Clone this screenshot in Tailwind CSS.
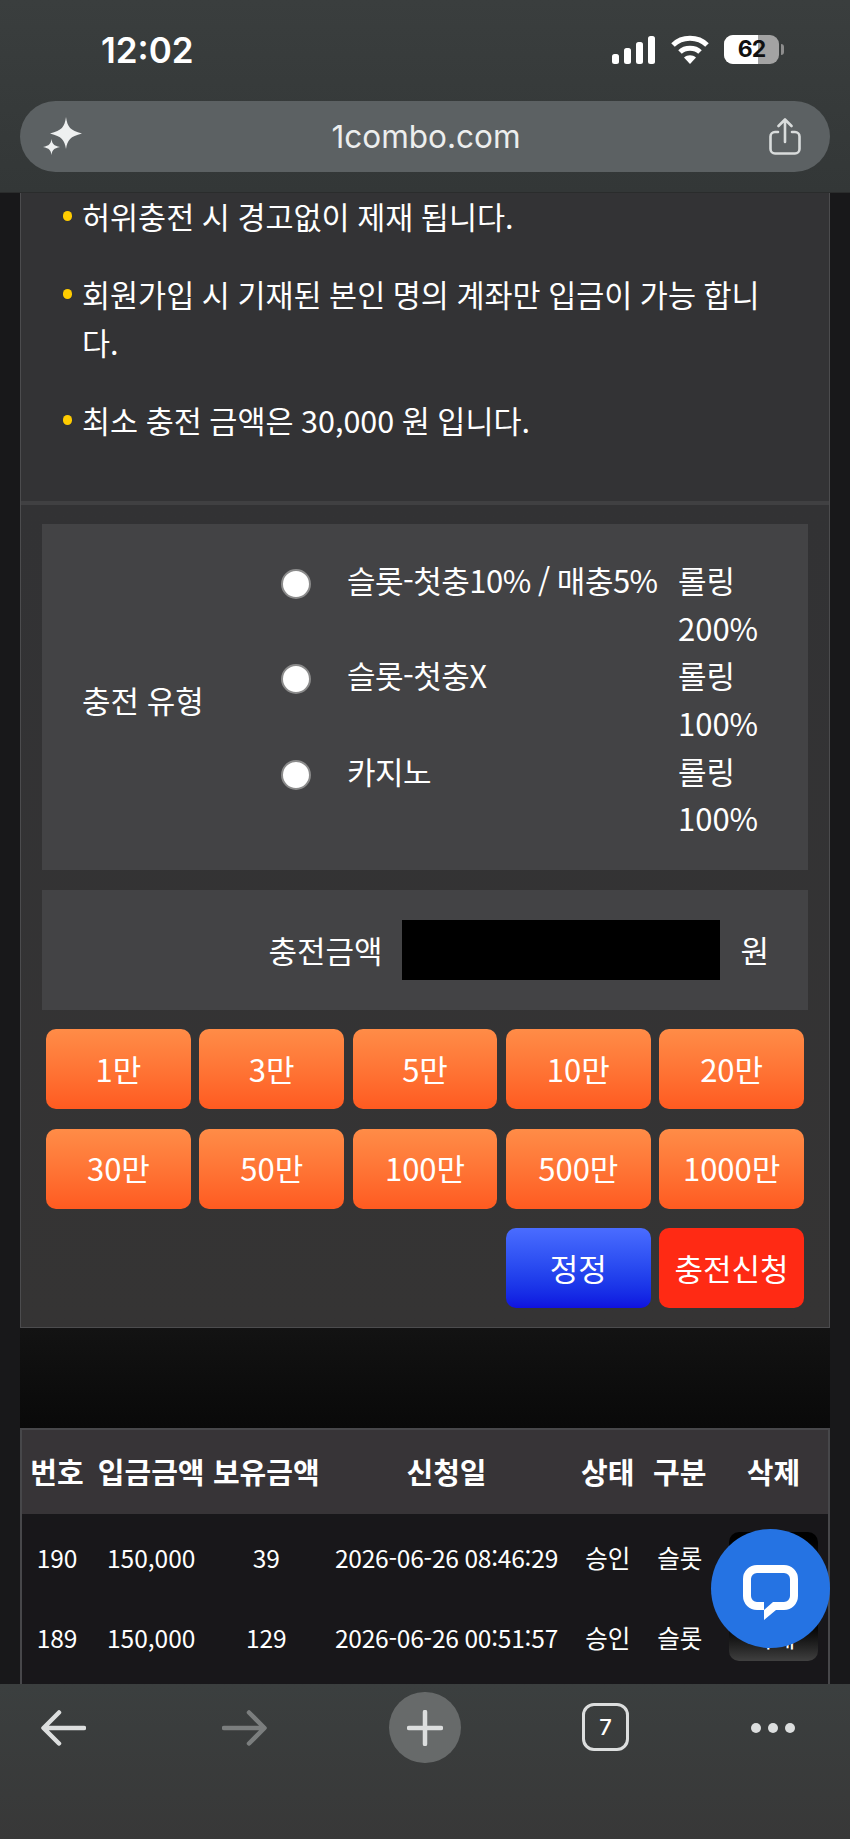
<!DOCTYPE html>
<html lang="ko">
<head>
    <meta charset="UTF-8">
    <meta name="viewport" content="width=device-width, initial-scale=1.0">
    <title>1combo.com</title>
    <script src="https://cdn.jsdelivr.net/npm/@tailwindcss/browser@4"></script>
</head>
<body class="bg-[#18181a] text-white font-['Noto_Sans_CJK_KR','Noto_Sans',sans-serif]">
    <div class="relative flex flex-col w-[850px] h-[1839px] overflow-hidden">

        <!-- Browser top bar -->
        <header class="h-[193px] shrink-0 bg-gradient-to-b from-[#3a3e3e] to-[#333737] border-b border-[#2a2c2c] px-[20px]">
            <div class="relative h-[101px] font-['Inter',sans-serif]">
                <span class="absolute left-[81px] top-[27px] text-[35px] leading-[46px] font-semibold">12:02</span>
                <!-- signal -->
                <svg class="absolute left-[592px] top-[36px]" width="44" height="28" viewBox="0 0 44 28" fill="#fff">
                    <rect x="0" y="18" width="7" height="10" rx="2.5"/>
                    <rect x="12" y="12" width="7" height="16" rx="2.5"/>
                    <rect x="24" y="6" width="7" height="22" rx="2.5"/>
                    <rect x="36" y="0" width="7" height="28" rx="2.5"/>
                </svg>
                <!-- wifi -->
                <svg class="absolute left-[651px] top-[35px]" width="38" height="29" viewBox="0 0 38 29" fill="none" stroke="#fff" stroke-width="5">
                    <path d="M2 10 C11 1 27 1 36 10"/>
                    <path d="M9 17 C14 12 24 12 29 17"/>
                    <path d="M19 29 L13 22.5 C16.5 19.5 21.5 19.5 25 22.5 Z" fill="#fff" stroke="none"/>
                </svg>
                <!-- battery -->
                <div class="absolute left-[704px] top-[35px] w-[55px] h-[29px] rounded-[9px] overflow-hidden bg-[#a3a3a3]">
                    <div class="w-[34px] h-full bg-white"></div>
                    <span class="absolute inset-0 flex items-center justify-center text-[#111] text-[23px] font-bold tracking-[-1px]">62</span>
                </div>
                <div class="absolute left-[761px] top-[44px] w-[3px] h-[11px] rounded-r-full bg-[#8d8d8d]"></div>
            </div>
            <div class="flex items-center justify-between h-[71px] rounded-[36px] bg-[#5c6163] pl-[23px] pr-[29px]">
                <svg width="40" height="40" viewBox="0 0 40 40" fill="#eef0f0">
                    <path d="M23 0 C24.5 10 27 13.5 39 16.5 C27 19.5 24.5 23 23 32 C21.5 23 19 19.5 7 16.5 C19 13.5 21.5 10 23 0 Z"/>
                    <path d="M8.500 22 C9.300 27 10.500 28.500 17 30 C10.500 31.500 9.300 33 8.500 38 C7.700 33 6.500 31.500 0 30 C6.500 28.500 7.700 27 8.500 22 Z"/>
                </svg>
                <span class="font-['Inter',sans-serif] text-[31.500px] text-[#eceeee]">1combo.com</span>
                <svg width="32" height="37" viewBox="0 0 32 37" fill="none" stroke="#d9dcdc" stroke-width="2.600" stroke-linecap="round" stroke-linejoin="round">
                    <path d="M9 14 H6 A4.500 4.500 0 0 0 1.500 18.500 V31 A4.500 4.500 0 0 0 6 35.500 H26 A4.500 4.500 0 0 0 30.500 31 V18.500 A4.500 4.500 0 0 0 26 14 H23"/>
                    <path d="M16 24 V2 M9.500 8 L16 1.500 L22.500 8"/>
                </svg>
            </div>
        </header>

        <!-- Page content -->
        <main class="flex-1 mx-[20px] overflow-hidden [word-spacing:-1px]">
            <section class="-mt-[1px] bg-[#333335] border-x border-b border-[#4c4c4e]">
                <ul class="pl-[42px] pr-[50px] pb-[57px] text-[30.500px] leading-[48px] space-y-[30px]">
                    <li class="relative pl-[19px]"><span class="absolute left-0 top-[19px] w-[9px] h-[10px] rounded-full bg-[#ffcc00]"></span>허위충전 시 경고없이 제재 됩니다.</li>
                    <li class="relative pl-[19px]"><span class="absolute left-0 top-[19px] w-[9px] h-[10px] rounded-full bg-[#ffcc00]"></span>회원가입 시 기재된 본인 명의 계좌만 입금이 가능 합니<br>다.</li>
                    <li class="relative pl-[19px]"><span class="absolute left-0 top-[19px] w-[9px] h-[10px] rounded-full bg-[#ffcc00]"></span>최소 충전 금액은 30,000 원 입니다.</li>
                </ul>
                <div class="h-[4px] bg-[#404042]"></div>

                <div class="pt-[19px] pb-[19px] px-[21px] bg-gradient-to-b from-[#323234] to-[#353434]">
                    <!-- charge type -->
                    <div class="flex items-center h-[346px] bg-[#434345] pl-[40px] pt-[6px] text-[31px] leading-[47.600px]">
                        <span class="w-[199px] shrink-0">충전 유형</span>
                        <div>
                            <div class="flex h-[95.300px]">
                                <input type="radio" name="type" class="appearance-none w-[30px] h-[30px] mt-[12px] mr-[36px] rounded-full bg-white border-2 border-[#8b8b8b]">
                                <span class="w-[331px] tracking-[-0.5px] -mt-[1px]">슬롯-첫충10% / 매충5%</span>
                                <span class="w-[100px] -mt-[1px]">롤링 200%</span>
                            </div>
                            <div class="flex h-[95.300px]">
                                <input type="radio" name="type" class="appearance-none w-[30px] h-[30px] mt-[12px] mr-[36px] rounded-full bg-white border-2 border-[#8b8b8b]">
                                <span class="w-[331px] tracking-[-0.5px] -mt-[1px]">슬롯-첫충X</span>
                                <span class="w-[100px] -mt-[1px]">롤링 100%</span>
                            </div>
                            <div class="flex h-[95.300px]">
                                <input type="radio" name="type" class="appearance-none w-[30px] h-[30px] mt-[12px] mr-[36px] rounded-full bg-white border-2 border-[#8b8b8b]">
                                <span class="w-[331px] tracking-[-0.5px] -mt-[1px]">카지노</span>
                                <span class="w-[100px] -mt-[1px]">롤링 100%</span>
                            </div>
                        </div>
                    </div>

                    <!-- amount -->
                    <div class="flex items-center justify-end gap-[20px] h-[120px] mt-[20px] bg-[#434345] pr-[39px] text-[31px]">
                        <span>충전금액</span>
                        <input type="text" class="w-[318px] h-[60px] bg-black">
                        <span>원</span>
                    </div>

                    <!-- amount buttons -->
                    <div class="grid grid-cols-5 gap-x-[8.500px] gap-y-[19.500px] mt-[19px] mx-[4px] text-[31px]">
                        <button class="h-[80px] rounded-[10px] bg-gradient-to-b from-[#ff8c47] to-[#ff5a20]">1만</button>
                        <button class="h-[80px] rounded-[10px] bg-gradient-to-b from-[#ff8c47] to-[#ff5a20]">3만</button>
                        <button class="h-[80px] rounded-[10px] bg-gradient-to-b from-[#ff8c47] to-[#ff5a20]">5만</button>
                        <button class="h-[80px] rounded-[10px] bg-gradient-to-b from-[#ff8c47] to-[#ff5a20]">10만</button>
                        <button class="h-[80px] rounded-[10px] bg-gradient-to-b from-[#ff8c47] to-[#ff5a20]">20만</button>
                        <button class="h-[80px] rounded-[10px] bg-gradient-to-b from-[#ff8c47] to-[#ff5a20]">30만</button>
                        <button class="h-[80px] rounded-[10px] bg-gradient-to-b from-[#ff8c47] to-[#ff5a20]">50만</button>
                        <button class="h-[80px] rounded-[10px] bg-gradient-to-b from-[#ff8c47] to-[#ff5a20]">100만</button>
                        <button class="h-[80px] rounded-[10px] bg-gradient-to-b from-[#ff8c47] to-[#ff5a20]">500만</button>
                        <button class="h-[80px] rounded-[10px] bg-gradient-to-b from-[#ff8c47] to-[#ff5a20]">1000만</button>
                        <button class="col-start-4 h-[80px] rounded-[10px] bg-gradient-to-b from-[#4a6cff] to-[#1010e0]">정정</button>
                        <button class="h-[80px] rounded-[10px] bg-[#ff2a14]">충전신청</button>
                    </div>
                </div>
            </section>

            <div class="h-[100px] bg-gradient-to-b from-[#131313] to-[#090909]"></div>

            <!-- History table -->
            <div class="h-[260px] border-x-2 border-t-2 border-[#47474a] bg-[#18171a]">
                <table class="w-full table-fixed text-center text-[24.500px]">
                    <colgroup>
                        <col class="w-[70px]"><col class="w-[118px]"><col class="w-[112px]"><col class="w-[248px]"><col class="w-[74px]"><col class="w-[70px]"><col class="w-[113px]">
                    </colgroup>
                    <thead>
                        <tr class="h-[84px] bg-[#373437] text-[29px] whitespace-nowrap">
                            <th class="font-bold">번호</th><th class="font-bold">입금금액</th><th class="font-bold">보유금액</th><th class="font-bold">신청일</th><th class="font-bold">상태</th><th class="font-bold">구분</th><th class="font-bold pl-[4px]">삭제</th>
                        </tr>
                    </thead>
                    <tbody class="whitespace-nowrap">
                        <tr class="h-[4px]"><td colspan="7"></td></tr>
                        <tr class="h-[80px]">
                            <td>190</td><td>150,000</td><td>39</td><td class="tracking-[-0.2px]">2026-06-26 08:46:29</td><td>승인</td><td>슬롯</td>
                            <td><button class="block w-[89px] h-[49px] ml-[14px] mb-[3px] rounded-[10px] bg-gradient-to-b from-black to-[#404040] text-[24px]">삭제</button></td>
                        </tr>
                        <tr class="h-[80px]">
                            <td>189</td><td>150,000</td><td>129</td><td class="tracking-[-0.2px]">2026-06-26 00:51:57</td><td>승인</td><td>슬롯</td>
                            <td><button class="block w-[89px] h-[49px] ml-[14px] mb-[3px] rounded-[10px] bg-gradient-to-b from-black to-[#404040] text-[24px]">삭제</button></td>
                        </tr>
                    </tbody>
                </table>
            </div>
        </main>

        <!-- Browser bottom bar -->
        <nav class="relative z-10 h-[155px] shrink-0 bg-gradient-to-b from-[#3b3f3f] to-[#383838]">
            <div class="flex items-start pt-[8px] pl-[41px]">
                <svg class="mt-[18px] shrink-0" width="45" height="36" viewBox="0 0 45 36" fill="none" stroke="#dcdede" stroke-width="4.500" stroke-linecap="round" stroke-linejoin="round">
                    <path d="M43 18 H3 M18 2.500 L2.500 18 L18 33.500"/>
                </svg>
                <svg class="mt-[18px] ml-[136px] shrink-0" width="45" height="36" viewBox="0 0 45 36" fill="none" stroke="#7b7e7e" stroke-width="4.500" stroke-linecap="round" stroke-linejoin="round">
                    <path d="M2 18 H42 M27 2.500 L42.500 18 L27 33.500"/>
                </svg>
                <div class="ml-[122px] flex shrink-0 items-center justify-center w-[72px] h-[71px] rounded-full bg-[#676a6a]">
                    <svg width="36" height="36" viewBox="0 0 36 36" fill="none" stroke="#dcdede" stroke-width="4.500" stroke-linecap="round">
                        <path d="M18 2 V34 M2 18 H34"/>
                    </svg>
                </div>
                <div class="ml-[121px] mt-[11px] flex shrink-0 items-center justify-center w-[47px] h-[48px] rounded-[12px] border-[3.500px] border-[#dcdede] font-['Inter',sans-serif] text-[22px] font-medium">7</div>
                <div class="ml-[122px] mt-[31px] flex shrink-0 gap-[7px]">
                    <span class="w-[10px] h-[10px] rounded-full bg-[#dcdede]"></span>
                    <span class="w-[10px] h-[10px] rounded-full bg-[#dcdede]"></span>
                    <span class="w-[10px] h-[10px] rounded-full bg-[#dcdede]"></span>
                </div>
            </div>
        </nav>

        <!-- Chat launcher -->
        <button class="absolute left-[711px] top-[1529px] z-20 flex items-center justify-center w-[119px] h-[119px] rounded-full bg-[#2573e3]">
            <svg class="mt-[8px]" width="55" height="55" viewBox="0 0 55 55" fill="#fff" fill-rule="evenodd">
                <path d="M14 0H41A14 14 0 0 1 55 14V31A14 14 0 0 1 41 45H33L21 55V45H14A14 14 0 0 1 0 31V14A14 14 0 0 1 14 0ZM14 8A6 6 0 0 0 8 14V31A6 6 0 0 0 14 37H21V45L30 37H41A6 6 0 0 0 47 31V14A6 6 0 0 0 41 8Z"/>
            </svg>
        </button>
    </div>
</body>
</html>
